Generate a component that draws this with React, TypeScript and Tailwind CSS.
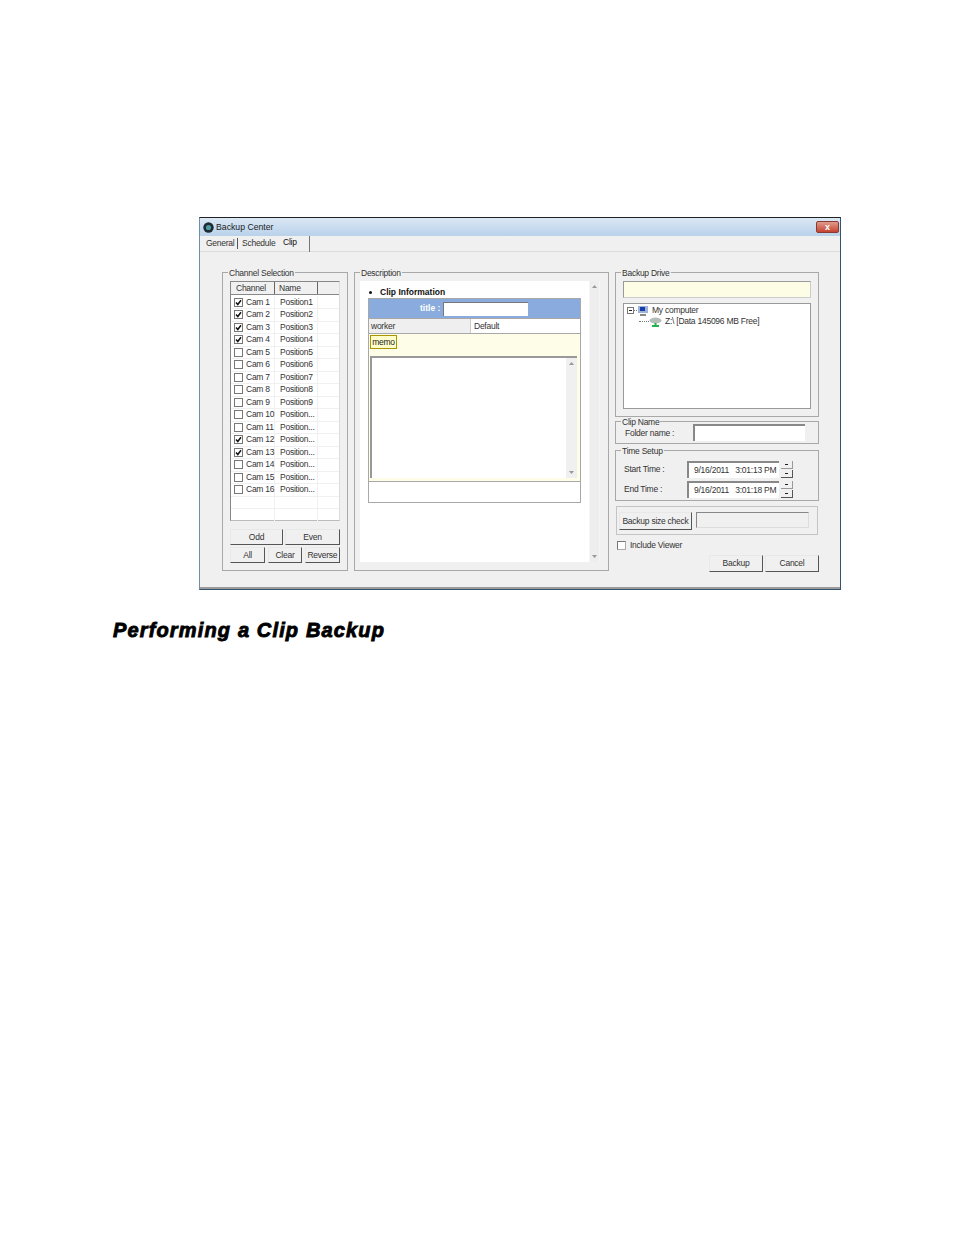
import type { ReactNode } from "react";

const CHANNELS = [
  { cam: "Cam 1", pos: "Position1", on: true },
  { cam: "Cam 2", pos: "Position2", on: true },
  { cam: "Cam 3", pos: "Position3", on: true },
  { cam: "Cam 4", pos: "Position4", on: true },
  { cam: "Cam 5", pos: "Position5", on: false },
  { cam: "Cam 6", pos: "Position6", on: false },
  { cam: "Cam 7", pos: "Position7", on: false },
  { cam: "Cam 8", pos: "Position8", on: false },
  { cam: "Cam 9", pos: "Position9", on: false },
  { cam: "Cam 10", pos: "Position...", on: false },
  { cam: "Cam 11", pos: "Position...", on: false },
  { cam: "Cam 12", pos: "Position...", on: true },
  { cam: "Cam 13", pos: "Position...", on: true },
  { cam: "Cam 14", pos: "Position...", on: false },
  { cam: "Cam 15", pos: "Position...", on: false },
  { cam: "Cam 16", pos: "Position...", on: false },
];

function Group({ label, className, children }: { label: string; className: string; children: ReactNode }) {
  return (
    <div className={`relative border border-[#a8a8a8] ${className}`}>
      <span className="absolute -top-[5px] left-[5px] bg-[#f0f0f0] px-px leading-[10px] whitespace-nowrap">{label}</span>
      {children}
    </div>
  );
}

function Btn({ className, children }: { className: string; children: ReactNode }) {
  return (
    <div className={`flex items-center justify-center border border-t-[#e8e8e8] border-l-[#e8e8e8] border-r-[#555] border-b-[#555] bg-[#f0f0f0] whitespace-nowrap ${className}`}>
      {children}
    </div>
  );
}

function CheckBox({ on }: { on: boolean }) {
  return (
    <div className="flex h-[9px] w-[9px] shrink-0 items-center justify-center border border-[#777] bg-white">
      {on && (
        <svg width="7" height="7" viewBox="0 0 7 7">
          <path d="M1 3.5 L2.8 5.5 L6 1.3" fill="none" stroke="#111" strokeWidth="1.5" />
        </svg>
      )}
    </div>
  );
}

function ScrollArrow({ up }: { up: boolean }) {
  return (
    <svg width="5" height="3" viewBox="0 0 5 3">
      <path d={up ? "M2.5 0 L5 3 L0 3 Z" : "M0 0 L5 0 L2.5 3 Z"} fill="#999" />
    </svg>
  );
}

function SpinPart({ dark }: { dark: boolean }) {
  return (
    <div className={`flex h-[8px] items-center justify-center border-r border-b bg-[#f0f0f0] ${dark ? "border-[#555]" : "border-[#999]"}`}>
      <div className="h-px w-[3px] bg-[#222]" />
    </div>
  );
}

function TimeRow({ label, value }: { label: string; value: string }) {
  return (
    <div className="flex h-[17px] items-center">
      <span className="w-[71px] pl-[8px] whitespace-nowrap">{label}</span>
      <div className="flex h-[17px] w-[92px] items-center border-t-2 border-l-2 border-t-[#888] border-l-[#888] bg-white pl-[5px] whitespace-pre">
        {value}
      </div>
      <div className="ml-[2px] flex w-[12px] flex-col gap-px">
        <SpinPart dark={false} />
        <SpinPart dark />
      </div>
    </div>
  );
}

export default function App() {
  return (
    <div className="h-[1235px] w-[954px] overflow-hidden bg-white pt-[217px] font-['Liberation_Sans',sans-serif] text-[8.5px] tracking-[-0.25px] text-[#333]">
      {/* dialog */}
      <div className="ml-[199px] flex h-[373px] w-[642px] flex-col border border-t-[#222] border-l-[#6f8ea8] border-r-[#33536e] border-b-[#33536e]">
        <div className="flex h-[18px] shrink-0 items-center bg-gradient-to-b from-[#dbe8f5] to-[#b9d1ea] pl-[3px]">
          <svg width="11" height="11" viewBox="0 0 11 11">
            <circle cx="5.5" cy="5.5" r="5.2" fill="#1d2b33" />
            <circle cx="5.5" cy="5.5" r="2.6" fill="#4f9aa3" />
          </svg>
          <span className="mt-px ml-[2px] text-[8.7px] tracking-normal text-[#222]">Backup Center</span>
          <div className="mr-[1px] ml-auto flex h-[12px] w-[23px] items-center justify-center rounded-[2px] border border-[#8a3a30] bg-gradient-to-b from-[#e09a8c] to-[#c4412f] text-[9px] leading-none font-bold text-white">
            x
          </div>
        </div>

        <div className="flex h-[16px] shrink-0 items-center border-b border-[#dcdcdc] bg-[#f0f0f0]">
          <span className="ml-[6px] w-[31px]">General</span>
          <div className="h-[11px] w-px bg-[#555]" />
          <span className="ml-[4px] w-[35px]">Schedule</span>
          <div className="flex h-[16px] w-[33px] items-start border-r border-[#777] pl-[6px] text-[#111]">Clip</div>
        </div>

        <div className="flex min-h-0 flex-1 gap-[6px] border-b-2 border-[#9a9a9a] bg-[#f0f0f0] pt-[20px] pl-[22px]">
          {/* channels */}
          <Group label="Channel Selection" className="h-[299px] w-[126px] shrink-0 px-[7px] pt-[8px]">
            <div className="h-[240px] w-[110px] border border-t-[#888] border-l-[#888] border-r-[#ddd] border-b-[#bbb] bg-white">
              <div className="flex h-[13px] items-end border-b border-[#888] bg-[#f0f0f0]">
                <div className="h-[12px] w-[44px] border-r border-[#666] pl-[5px] leading-[12px]">Channel</div>
                <div className="h-[12px] w-[43px] border-r border-[#666] pl-[4px] leading-[12px]">Name</div>
              </div>
              <div className="mt-[1.5px]">
                {CHANNELS.map((c) => (
                  <div key={c.cam} className="flex h-[12.5px] items-center border-b border-[#f0f0f0]">
                    <div className="flex w-[44px] items-center border-r border-[#f0f0f0] pl-[3px]">
                      <CheckBox on={c.on} />
                      <span className="ml-[3px] whitespace-nowrap">{c.cam}</span>
                    </div>
                    <span className="w-[43px] border-r border-[#f0f0f0] pl-[5px] whitespace-nowrap">{c.pos}</span>
                  </div>
                ))}
                <div className="flex h-[12.5px] border-b border-[#f0f0f0]">
                  <div className="w-[44px] border-r border-[#f0f0f0]" />
                  <div className="w-[43px] border-r border-[#f0f0f0]" />
                </div>
                <div className="flex h-[12px]">
                  <div className="w-[44px] border-r border-[#f0f0f0]" />
                  <div className="w-[43px] border-r border-[#f0f0f0]" />
                </div>
              </div>
            </div>
            <div className="mt-[8px] flex gap-[2px]">
              <Btn className="h-[16px] w-[54px]">Odd</Btn>
              <Btn className="h-[16px] w-[56px]">Even</Btn>
            </div>
            <div className="mt-[2px] flex gap-[3px]">
              <Btn className="h-[16px] w-[36px]">All</Btn>
              <Btn className="h-[16px] w-[34px]">Clear</Btn>
              <Btn className="h-[16px] w-[36px]">Reverse</Btn>
            </div>
          </Group>

          {/* description */}
          <Group label="Description" className="flex h-[299px] w-[255px] shrink-0 pt-[8px] pl-[5px]">
            <div className="h-[281px] w-[229px] bg-white pl-[8px]">
              <div className="flex h-[17px] items-end pb-[1px] leading-[9px] font-bold tracking-normal text-[#111]">
                <span className="ml-px h-[3px] w-[3px] -translate-y-[3px] rounded-full bg-[#111]" />
                <span className="ml-[8px]">Clip Information</span>
              </div>
              <div className="w-[213px] border border-[#a8a8a8]">
                <div className="flex h-[19px] items-center bg-[#8aabdd] pl-[51px] font-bold tracking-normal text-white">
                  title :
                  <div className="ml-[3px] h-[14px] w-[85px] border-t border-l border-[#777] bg-white" />
                </div>
                <div className="flex h-[15px] border-t border-[#a8a8a8]">
                  <div className="flex w-[102px] items-center border-r border-[#ccc] bg-[#efefef] pl-[2px]">worker</div>
                  <div className="flex items-center pl-[3px]">Default</div>
                </div>
                <div className="h-[148px] border-t border-[#a8a8a8] bg-[#fdfde8] px-px pt-px">
                  <div className="flex h-[14px] w-[27px] items-center justify-center border border-[#a89500] bg-[#ffffcc] text-[#222]">memo</div>
                  <div className="mt-[7px] flex h-[122px] w-[207px] border-t-2 border-l-2 border-t-[#999] border-l-[#999] bg-white">
                    <div className="ml-auto flex w-[11px] flex-col items-center justify-between bg-[#f0f0f0] py-[4px]">
                      <ScrollArrow up />
                      <ScrollArrow up={false} />
                    </div>
                  </div>
                </div>
                <div className="h-[21px] border-t border-[#a8a8a8]" />
              </div>
            </div>
            <div className="flex h-[281px] w-[11px] flex-col items-center justify-between border-x border-[#f5f5f5] bg-[#eeeeee] py-[4px]">
              <ScrollArrow up />
              <ScrollArrow up={false} />
            </div>
          </Group>

          {/* right column */}
          <div className="w-[204px] shrink-0">
            <Group label="Backup Drive" className="h-[145px] px-[7px] pt-[8px]">
              <div className="h-[17px] w-[188px] border border-[#ccc] border-t-[#999] border-l-[#999] bg-[#fdfde6]" />
              <div className="mt-[5px] h-[106px] w-[188px] border border-[#999] bg-white pt-px pl-[3px]">
                <div className="flex h-[11px] items-center">
                  <div className="flex h-[7px] w-[7px] items-center justify-center border border-[#777]">
                    <div className="h-px w-[3px] bg-[#222]" />
                  </div>
                  <div className="w-[3px] border-t border-dotted border-[#777]" />
                  <svg width="12" height="10" viewBox="0 0 12 10">
                    <rect x="1" y="0" width="10" height="7" fill="#9db4d8" />
                    <rect x="3" y="1" width="5" height="4" fill="#1b3fa8" />
                    <rect x="3" y="8" width="6" height="2" fill="#888" />
                  </svg>
                  <span className="ml-[3px]">My computer</span>
                </div>
                <div className="flex h-[11px] items-center pl-[12px]">
                  <div className="w-[10px] border-t border-dotted border-[#777]" />
                  <svg width="13" height="10" viewBox="0 0 13 10">
                    <ellipse cx="6.5" cy="3.5" rx="6" ry="3" fill="#b5bdb8" />
                    <path d="M5.5 6h2v2h2.5v2H3V8h2.5z" fill="#22b14c" />
                  </svg>
                  <span className="ml-[3px] whitespace-nowrap">Z:\ [Data 145096 MB Free]</span>
                </div>
              </div>
            </Group>

            <Group label="Clip Name" className="mt-[4px] flex h-[23px] items-center">
              <span className="ml-[9px] w-[68px] pt-[2px] whitespace-nowrap">Folder name :</span>
              <div className="h-[17px] w-[112px] border-t-2 border-l-2 border-t-[#888] border-l-[#888] bg-white" />
            </Group>

            <Group label="Time Setup" className="mt-[6px] flex h-[51px] flex-col gap-[3px] pt-[10px]">
              <TimeRow label="Start Time :" value="9/16/2011   3:01:13 PM" />
              <TimeRow label="End Time :" value="9/16/2011   3:01:18 PM" />
            </Group>

            <div className="mt-[5px] ml-px flex h-[29px] w-[202px] items-start border border-[#c4c4c4] pt-[5px] pl-[2px]">
              <Btn className="h-[18px] w-[73px]">Backup size check</Btn>
              <div className="ml-[4px] h-[16px] w-[113px] border border-t-[#888] border-l-[#888] border-r-[#ddd] border-b-[#ddd]" />
            </div>

            <div className="mt-[5px] ml-[2px] flex h-[10px] items-center">
              <div className="h-[9px] w-[9px] border border-[#aaa] border-t-[#777] border-l-[#777] bg-white" />
              <span className="ml-[4px]">Include Viewer</span>
            </div>

            <div className="mt-[5px] flex justify-end gap-[2px]">
              <Btn className="h-[17px] w-[54px]">Backup</Btn>
              <Btn className="h-[17px] w-[54px]">Cancel</Btn>
            </div>
          </div>
        </div>
      </div>

      <h2 className="mt-[28px] ml-[113px] text-[20px] leading-[24px] font-bold tracking-[1.15px] text-black italic [-webkit-text-stroke:0.9px_#000]">
        Performing a Clip Backup
      </h2>
    </div>
  );
}
